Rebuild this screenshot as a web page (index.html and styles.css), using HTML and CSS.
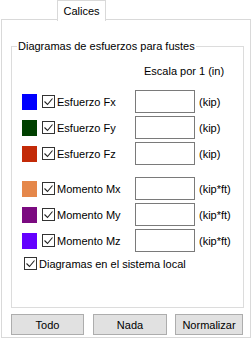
FILE: index.html
```html
<!DOCTYPE html>
<html lang="es">
<head>
    <meta charset="UTF-8">
    <title>Calices</title>
    <link rel="stylesheet" href="styles.css">
</head>
<body>

    <!-- Tab strip -->
    <div class="tabs">
        <div class="tab">Calices</div>
    </div>

    <!-- Tab page -->
    <div class="panel">
        <fieldset class="group">
            <legend>Diagramas de esfuerzos para fustes</legend>
            <div class="scale-head">Escala por 1 (in)</div>

            <div class="rows">
                <div class="row">
                    <span class="swatch" style="background:#0000ff"></span>
                    <label class="item"><span class="check"><svg width="11" height="11"><polyline points="1.5,5.5 4.5,8.5 9.5,2.5"/></svg></span>Esfuerzo Fx</label>
                    <input class="scale" type="text">
                    <span class="unit">(kip)</span>
                </div>
                <div class="row">
                    <span class="swatch" style="background:#004000"></span>
                    <label class="item"><span class="check"><svg width="11" height="11"><polyline points="1.5,5.5 4.5,8.5 9.5,2.5"/></svg></span>Esfuerzo Fy</label>
                    <input class="scale" type="text">
                    <span class="unit">(kip)</span>
                </div>
                <div class="row">
                    <span class="swatch" style="background:#c32a08"></span>
                    <label class="item"><span class="check"><svg width="11" height="11"><polyline points="1.5,5.5 4.5,8.5 9.5,2.5"/></svg></span>Esfuerzo Fz</label>
                    <input class="scale" type="text">
                    <span class="unit">(kip)</span>
                </div>
            </div>

            <div class="rows moments">
                <div class="row">
                    <span class="swatch" style="background:#e5874a"></span>
                    <label class="item"><span class="check"><svg width="11" height="11"><polyline points="1.5,5.5 4.5,8.5 9.5,2.5"/></svg></span>Momento Mx</label>
                    <input class="scale" type="text">
                    <span class="unit">(kip*ft)</span>
                </div>
                <div class="row">
                    <span class="swatch" style="background:#7b0a80"></span>
                    <label class="item"><span class="check"><svg width="11" height="11"><polyline points="1.5,5.5 4.5,8.5 9.5,2.5"/></svg></span>Momento My</label>
                    <input class="scale" type="text">
                    <span class="unit">(kip*ft)</span>
                </div>
                <div class="row">
                    <span class="swatch" style="background:#6400ff"></span>
                    <label class="item"><span class="check"><svg width="11" height="11"><polyline points="1.5,5.5 4.5,8.5 9.5,2.5"/></svg></span>Momento Mz</label>
                    <input class="scale" type="text">
                    <span class="unit">(kip*ft)</span>
                </div>
            </div>

            <label class="local"><span class="check"><svg width="11" height="11"><polyline points="1.5,5.5 4.5,8.5 9.5,2.5"/></svg></span>Diagramas en el sistema local</label>
        </fieldset>

        <!-- Bottom buttons -->
        <div class="buttons">
            <button class="btn btn-todo">Todo</button>
            <button class="btn btn-nada">Nada</button>
            <button class="btn btn-norm">Normalizar</button>
        </div>
    </div>

</body>
</html>
```

FILE: styles.css
```css
/* General */
body {
    margin: 0;
    padding: 0;
    width: 252px;
    height: 339px;
    background-color: #fff;
    font-family: "Liberation Sans", Arial, sans-serif;
    font-size: 11px;
    color: #000;
    overflow: hidden;
}

/* Tab strip */
.tabs {
    height: 19px;
    display: flex;
    padding-left: 57px;
}

.tab {
    position: relative;
    z-index: 1;
    width: 47px;
    height: 20px;
    border: 1px solid #d9d9d9;
    border-bottom: none;
    background-color: #fff;
    text-align: center;
    line-height: 20px;
}

/* Tab page */
.panel {
    margin-left: 1px;
    width: 250px;
    height: 319px;
    box-sizing: border-box;
    border: 1px solid #d9d9d9;
}

/* Group box */
.group {
    margin: 19px 0 0 9px;
    padding: 0;
    width: 233px;
    height: 269px;
    box-sizing: border-box;
    border: 1px solid #dcdcdc;
}

.group legend {
    margin-left: 5px;
    padding: 0 1px;
    line-height: 14px;
}

.scale-head {
    margin: 11px 0 0 132px;
    line-height: 14px;
}

.rows {
    display: flex;
    flex-direction: column;
    gap: 3px;
    margin-top: 12px;
}

.rows.moments {
    margin-top: 12px;
}

.row {
    display: flex;
    align-items: center;
    height: 23px;
    padding-left: 10px;
}

.swatch {
    width: 15px;
    height: 16px;
    margin-right: 5px;
}

.item {
    display: flex;
    align-items: center;
    width: 93px;
}

.check {
    display: inline-flex;
    width: 11px;
    height: 11px;
    margin-right: 2px;
    border: 1px solid #333;
    background-color: #fff;
}

.check polyline {
    fill: none;
    stroke: #222;
    stroke-width: 1.1;
}

.scale {
    width: 60px;
    height: 23px;
    box-sizing: border-box;
    margin: 0;
    padding: 0;
    border: 1px solid #7a7a7a;
    background-color: #fff;
}

.unit {
    margin-left: 4px;
}

.local {
    display: flex;
    align-items: center;
    margin: 5px 0 0 12px;
}

/* Buttons */
.buttons {
    display: flex;
    margin: 6px 0 0 9px;
}

.btn {
    height: 21px;
    margin: 0;
    padding: 0;
    border: 1px solid #adadad;
    background-color: #e1e1e1;
    font-family: "Liberation Sans", Arial, sans-serif;
    font-size: 11px;
    color: #000;
}

.btn-todo {
    width: 73px;
}

.btn-nada {
    width: 74px;
    margin-left: 9px;
}

.btn-norm {
    width: 68px;
    margin-left: 8px;
}
```
